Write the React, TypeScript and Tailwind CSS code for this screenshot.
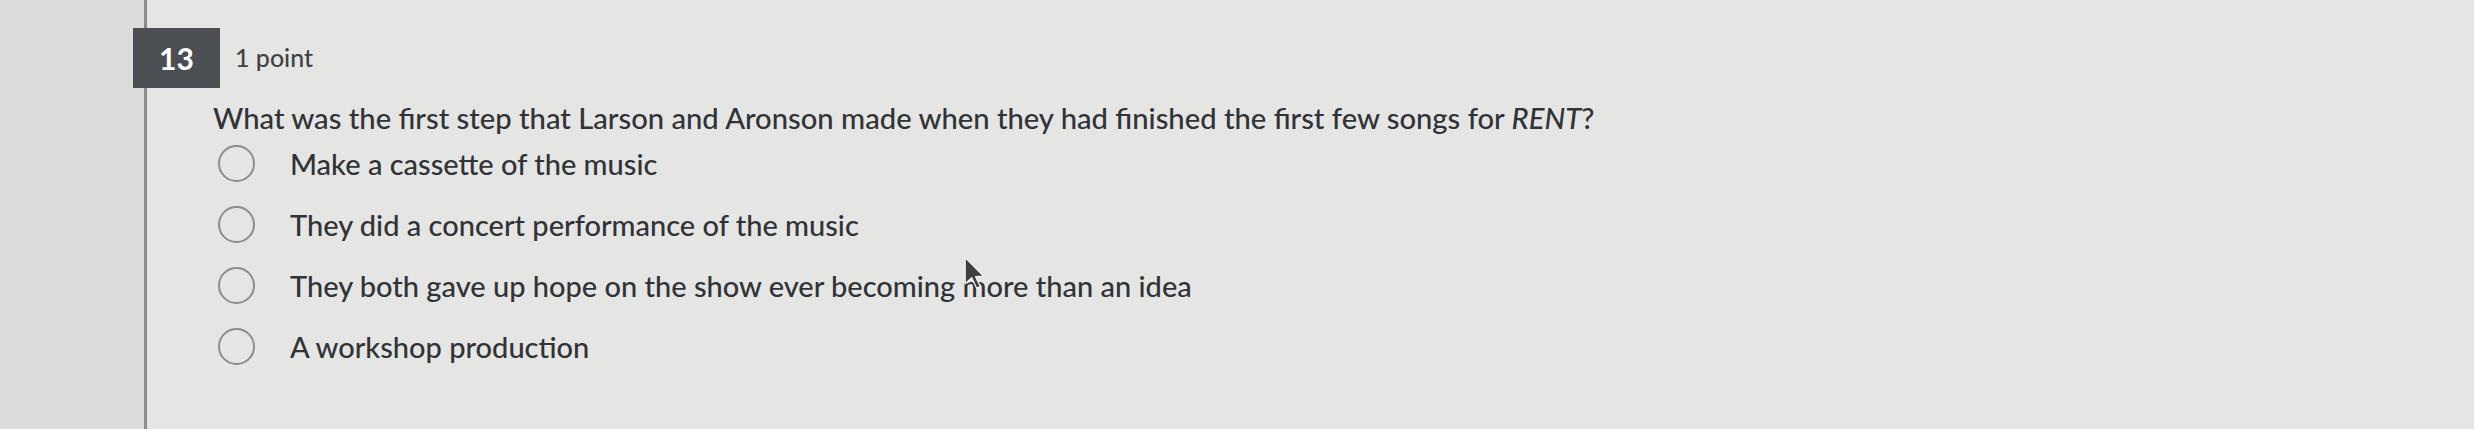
import React from "react";

const options = [
  "Make a cassette of the music",
  "They did a concert performance of the music",
  "They both gave up hope on the show ever becoming more than an idea",
  "A workshop production",
];

export default function App() {
  return (
    <div
      className="relative flex h-[429px] w-full overflow-hidden bg-[#e5e5e3] text-[#303337]"
      style={{ fontFamily: "Lato, 'Open Sans', sans-serif" }}
    >
      <div className="w-[147px] shrink-0 border-r-[3px] border-[#8c8c8c] bg-[#dcdcda]" />
      <div className="flex flex-col">
        <div className="mt-[28px] ml-[-14px] flex items-center">
          <div className="flex h-[60px] w-[87px] items-center justify-center bg-[#4b4f53] text-[30px] font-bold text-white">
            13
          </div>
          <div className="ml-[15px] text-[25px] font-medium text-[#3e4145]">1 point</div>
        </div>
        <div className="mt-[11px] ml-[66px] text-[29.2px] font-medium leading-[38px]">
          What was the first step that Larson and Aronson made when they had finished the first few songs for <i>RENT</i>?
        </div>
        <div className="mt-[8px] ml-[71px] flex flex-col gap-[24px]">
          {options.map((o) => (
            <div key={o} className="flex items-center">
              <div className="h-[37px] w-[37px] shrink-0 rounded-full border-2 border-[#8d8d8d]" />
              <div className="ml-[35px] text-[29px] font-medium leading-[37px]">{o}</div>
            </div>
          ))}
        </div>
      </div>
      <svg
        className="absolute left-[963px] top-[256px]"
        width="24"
        height="36"
        viewBox="0 0 22 32"
      >
        <path
          d="M2 1 L2 25 L8 19.5 L12.5 29 L16 27.5 L11.5 18.5 L19 18 Z"
          fill="#3d4043"
          stroke="#f2f2f2"
          strokeWidth="1.2"
          strokeLinejoin="round"
        />
      </svg>
    </div>
  );
}
